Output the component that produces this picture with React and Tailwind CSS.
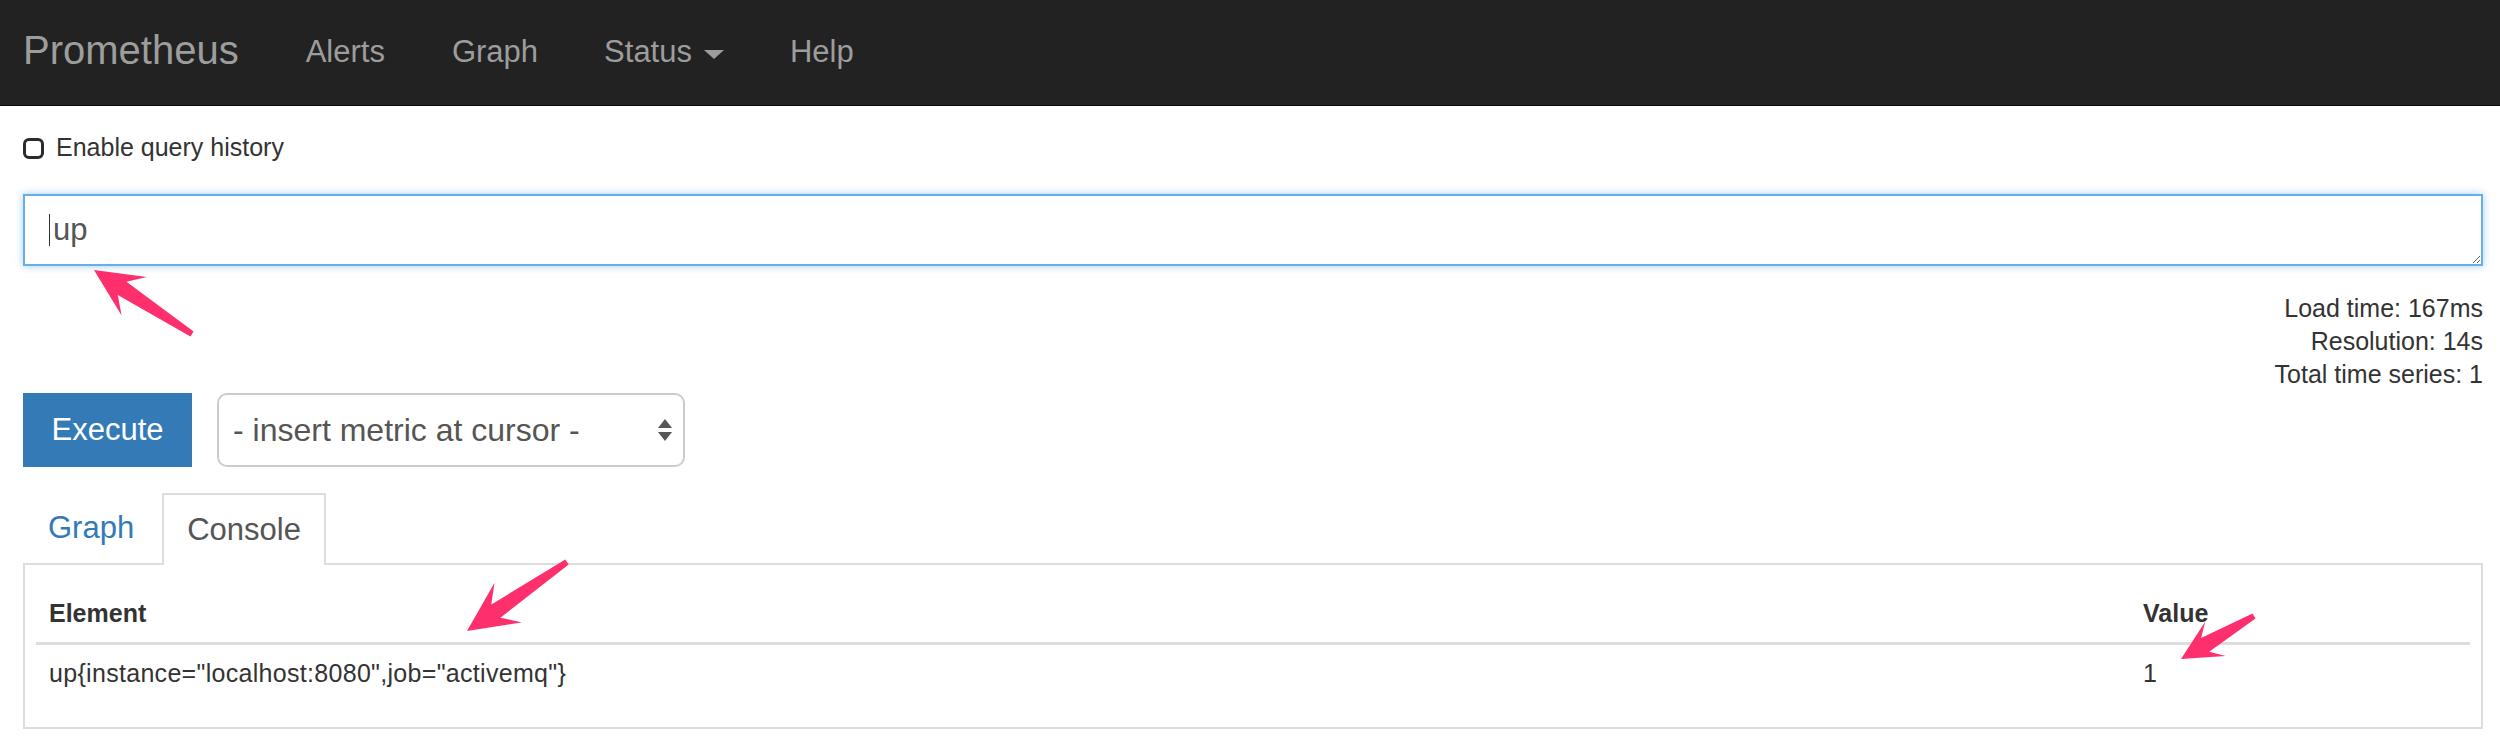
import React from 'react'

const arrowPoints = (tx, ty, px, py, h, w) => {
    const L = Math.hypot(px - tx, py - ty)
    const a = Math.atan2(py - ty, px - tx)
    const c = Math.cos(a)
    const s = Math.sin(a)
    const local = [
        [0, -3], [L - h * 0.7, -8], [L - h, -w], [L, 0],
        [L - h, w], [L - h * 0.7, 8], [0, 3],
    ]
    return local
        .map(([x, y]) => `${(tx + x * c - y * s).toFixed(1)},${(ty + x * s + y * c).toFixed(1)}`)
        .join(' ')
}

const Arrows = () => (
    <svg className='absolute left-0 top-0 pointer-events-none' width='2500' height='738'>
        <polygon points={arrowPoints(192, 334, 94, 270, 48, 23)} fill='#fe2f6d' />
        <polygon points={arrowPoints(567, 562, 467, 631, 50, 24)} fill='#fe2f6d' />
        <polygon points={arrowPoints(2254, 616, 2181, 659, 40, 20)} fill='#fe2f6d' />
    </svg>
)

const App = () => {
  return (
    <div className="relative min-h-[738px] bg-white text-[#333] font-['Liberation_Sans',Arial,sans-serif]">
        <nav className='h-[106px] bg-[#222] border-b border-[#080808] flex items-center text-[#9d9d9d]'>
            <a className='ml-[23px] mr-[33px] pb-[6px] text-[40px]'>Prometheus</a>
            <a className='px-[34px] text-[31px]'>Alerts</a>
            <a className='px-[33px] text-[31px]'>Graph</a>
            <a className='px-[33px] text-[31px] flex items-center'>
                Status
                <span className='ml-[12px] mt-[4px] w-0 h-0 border-t-[9px] border-t-[#9d9d9d] border-x-[10px] border-x-transparent'></span>
            </a>
            <a className='px-[33px] text-[31px]'>Help</a>
        </nav>

        <div className='pl-[23px] pr-[17px]'>
            <label className='mt-[25px] h-[34px] flex items-center text-[25px]'>
                <input type='checkbox' className='appearance-none m-0 mr-[12px] w-[21px] h-[21px] border-[3px] border-[#2b2b2b] rounded-[6px]' />
                Enable query history
            </label>

            <div className='relative mt-[29px]'>
                <textarea
                    defaultValue='up'
                    rows={1}
                    className='block w-full h-[72px] border-2 border-[#66afe9] shadow-[0_0_8px_rgba(102,175,233,0.6)] pl-[28px] pt-[14px] text-[31px] leading-[40px] text-[#555] outline-none resize-y'
                ></textarea>
                <span className='absolute left-[26px] top-[20px] w-px h-[32px] bg-[#333]'></span>
            </div>

            <div className='mt-[26px] text-right text-[25px] leading-[33px]'>
                <div>Load time: 167ms</div>
                <div>Resolution: 14s</div>
                <div>Total time series: 1</div>
            </div>

            <div className='mt-[2px] flex items-center gap-[25px]'>
                <button className='w-[169px] h-[74px] bg-[#337ab7] text-white text-[31px]'>Execute</button>
                <div className='w-[468px] h-[74px] border-2 border-[#ccc] rounded-[10px] flex items-center justify-between pl-[14px] pr-[11px] text-[32px] text-[#555]'>
                    <span>- insert metric at cursor -</span>
                    <svg width='14' height='22' viewBox='0 0 14 22'>
                        <polygon points='7,0 14,9 0,9' fill='#555' />
                        <polygon points='0,13 14,13 7,22' fill='#555' />
                    </svg>
                </div>
            </div>

            <div className='mt-[26px] h-[70px] flex items-start'>
                <a className='h-[70px] mr-[3px] px-[23px] flex items-center border-2 border-transparent text-[31px] text-[#337ab7]'>Graph</a>
                <div className='relative z-10 h-[72px] px-[23px] flex items-center border-2 border-b-0 border-[#ddd] bg-white text-[31px] text-[#555]'>Console</div>
            </div>

            <div className='border-2 border-[#ddd] pt-[21px] px-[11px] pb-[34px]'>
                <table className='w-full border-collapse text-[25px]'>
                    <thead>
                        <tr className='border-b-[3px] border-[#ddd]'>
                            <th className='h-[57px] px-[13px] text-left font-bold'>Element</th>
                            <th className='w-[340px] h-[57px] px-[13px] text-left font-bold'>Value</th>
                        </tr>
                    </thead>
                    <tbody>
                        <tr>
                            <td className='h-[50px] px-[13px] pt-[10px] tracking-[0.3px]'>up{'{'}instance="localhost:8080",job="activemq"{'}'}</td>
                            <td className='h-[50px] px-[13px] pt-[10px]'>1</td>
                        </tr>
                    </tbody>
                </table>
            </div>
        </div>

        <Arrows />
    </div>
  )
}

export default App
